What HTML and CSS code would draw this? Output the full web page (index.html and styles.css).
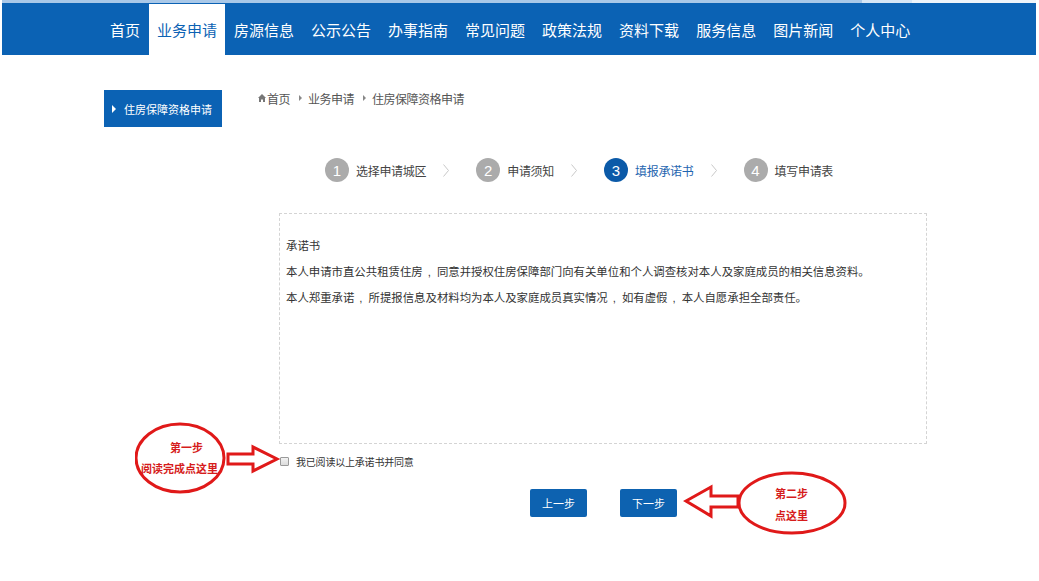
FILE: index.html
```html
<!DOCTYPE html>
<html lang="zh-CN">
<head>
<meta charset="utf-8">
<title>住房保障资格申请</title>
<link rel="stylesheet" href="styles.css">
</head>
<body>
<div class="topline"></div>
<nav class="nav">
  <a class="nav-item">首页</a>
  <a class="nav-item active">业务申请</a>
  <a class="nav-item">房源信息</a>
  <a class="nav-item">公示公告</a>
  <a class="nav-item">办事指南</a>
  <a class="nav-item">常见问题</a>
  <a class="nav-item">政策法规</a>
  <a class="nav-item">资料下载</a>
  <a class="nav-item">服务信息</a>
  <a class="nav-item">图片新闻</a>
  <a class="nav-item">个人中心</a>
</nav>

<div class="page">
  <aside class="sidebar">
    <div class="side-item"><span class="tri"></span>住房保障资格申请</div>
  </aside>
  <main class="main">
    <div class="crumbs">
      <svg class="home" width="8" height="8" viewBox="0 0 8 8"><path d="M4 0 L8 4 L7 4 L7 8 L5 8 L5 5.5 L3 5.5 L3 8 L1 8 L1 4 L0 4 Z" fill="#777"/></svg>
      <span>首页</span>
      <span class="sep"></span><span>业务申请</span>
      <span class="sep"></span><span>住房保障资格申请</span>
    </div>

    <div class="steps">
      <div class="step"><span class="num">1</span><span class="label">选择申请城区</span></div>
      <svg class="chev" width="6" height="13" viewBox="0 0 6 13"><path d="M0.5 0.5 L5.5 6.5 L0.5 12.5" fill="none" stroke="#c8c8c8" stroke-width="1"/></svg>
      <div class="step"><span class="num">2</span><span class="label">申请须知</span></div>
      <svg class="chev" width="6" height="13" viewBox="0 0 6 13"><path d="M0.5 0.5 L5.5 6.5 L0.5 12.5" fill="none" stroke="#c8c8c8" stroke-width="1"/></svg>
      <div class="step current"><span class="num">3</span><span class="label">填报承诺书</span></div>
      <svg class="chev" width="6" height="13" viewBox="0 0 6 13"><path d="M0.5 0.5 L5.5 6.5 L0.5 12.5" fill="none" stroke="#c8c8c8" stroke-width="1"/></svg>
      <div class="step"><span class="num">4</span><span class="label">填写申请表</span></div>
    </div>

    <div class="letter">
      <p>承诺书</p>
      <p>本人申请市直公共租赁住房<span class="comma">,</span>同意并授权住房保障部门向有关单位和个人调查核对本人及家庭成员的相关信息资料。</p>
      <p>本人郑重承诺<span class="comma">,</span>所提报信息及材料均为本人及家庭成员真实情况<span class="comma">,</span>如有虚假<span class="comma">,</span>本人自愿承担全部责任。</p>
    </div>

    <label class="agree"><span class="box"></span>我已阅读以上承诺书并同意</label>

    <div class="buttons">
      <button class="btn">上一步</button>
      <button class="btn">下一步</button>
    </div>
  </main>
</div>

<div class="note note-1">
  <svg width="150" height="74" viewBox="0 0 150 74">
    <ellipse cx="45" cy="37" rx="44" ry="34" fill="none" stroke="#e01919" stroke-width="3"/>
    <path d="M93 33 L118 33 L118 26 L142 38 L118 50 L118 43 L93 43 Z" fill="none" stroke="#e01919" stroke-width="3" stroke-linejoin="miter"/>
  </svg>
  <span class="note-text t1">第一步</span>
  <span class="note-text t2">阅读完成点这里</span>
</div>

<div class="note note-2">
  <svg width="170" height="66" viewBox="0 0 170 66">
    <path d="M6 31 L31 17 L31 26 L58 26 L58 37 L31 37 L31 46 Z" fill="none" stroke="#e01919" stroke-width="3" stroke-linejoin="miter"/>
    <ellipse cx="112" cy="33" rx="53" ry="30" fill="none" stroke="#e01919" stroke-width="3"/>
  </svg>
  <span class="note-text t3">第二步</span>
  <span class="note-text t4">点这里</span>
</div>
</body>
</html>
```

FILE: styles.css
```css
* { box-sizing: border-box; }

body {
  margin: 0;
  background: #fff;
  font-family: "Microsoft YaHei", "Noto Sans CJK SC", "Noto Sans", sans-serif;
  color: #333;
  position: relative;
  min-height: 581px;
}

.topline {
  height: 3px;
  margin: 0 3px 0 2px;
  background: linear-gradient(to right, #a9c8e8 0, #a9c8e8 860px, #d6e6f6 860px, #d6e6f6 910px, #eef4fa 910px);
}

.nav {
  height: 52px;
  margin: 0 3px 0 2px;
  background: #0b62b4;
  display: flex;
  align-items: stretch;
  padding-left: 100px;
  gap: 1px;
}

.nav-item {
  display: flex;
  align-items: center;
  padding: 0 8px;
  color: #fff;
  font-size: 15px;
  letter-spacing: 0;
  cursor: pointer;
}

.nav-item.active {
  background: #fff;
  color: #0b62b4;
  margin-top: 1px;
}

.page {
  display: flex;
  align-items: flex-start;
  padding: 35px 0 0 104px;
}

.sidebar { width: 118px; flex: none; }

.side-item {
  height: 37px;
  background: #0b62b4;
  color: #fff;
  font-size: 11px;
  display: flex;
  align-items: center;
  padding-left: 8px;
  letter-spacing: 0;
}

.tri {
  width: 0;
  height: 0;
  border-left: 4px solid #fff;
  border-top: 4px solid transparent;
  border-bottom: 4px solid transparent;
  margin-right: 8px;
}

.main {
  margin-left: 36px;
  width: 680px;
}

.crumbs {
  height: 16px;
  display: flex;
  align-items: center;
  font-size: 12px;
  color: #555;
  letter-spacing: -0.5px;
}

.home { margin-right: 1px; }

.sep {
  width: 0;
  height: 0;
  border-left: 3px solid #888;
  border-top: 3px solid transparent;
  border-bottom: 3px solid transparent;
  margin: 0 6px 0 9px;
}

.steps {
  display: flex;
  align-items: center;
  margin-top: 52px;
  padding-left: 67px;
  height: 24px;
}

.step {
  display: flex;
  align-items: center;
}

.num {
  width: 24px;
  height: 24px;
  border-radius: 50%;
  background: #ababab;
  color: #fff;
  font-family: "Liberation Sans", Arial, sans-serif;
  font-size: 15px;
  display: flex;
  align-items: center;
  justify-content: center;
  margin-right: 7px;
}

.label {
  font-size: 12px;
  color: #444;
  letter-spacing: -0.3px;
}

.step.current .num { background: #0b5aa8; }
.step.current .label { color: #1f66b0; }

.chev { margin: 0 27px 0 17px; }

.letter {
  margin: 31px 0 0 21px;
  width: 648px;
  height: 231px;
  border: 1px dashed #d4d4d4;
  padding: 19px 6px 0;
  font-size: 11.4px;
  color: #333;
}

.letter p {
  margin: 0;
  line-height: 25.5px;
  white-space: nowrap;
}

.comma { margin: 0 6px 0 5px; font-family: "Liberation Sans", sans-serif; }

.agree {
  display: flex;
  align-items: center;
  margin: 11px 0 0 22px;
  height: 12px;
  font-size: 10px;
  color: #333;
  letter-spacing: -0.2px;
}

.box {
  width: 9px;
  height: 9px;
  border: 1px solid #9a9a9a;
  border-radius: 1px;
  background: linear-gradient(#f2f2f2, #dcdcdc);
  margin-right: 7px;
}

.buttons {
  display: flex;
  gap: 33px;
  margin: 22px 0 0 272px;
}

.btn {
  width: 57px;
  height: 28px;
  border: none;
  border-radius: 2px;
  background: #0d62b0;
  color: #fff;
  font-family: inherit;
  font-size: 11px;
  padding: 0;
}

.note { position: absolute; }
.note-1 { left: 135px; top: 421px; width: 150px; height: 74px; }
.note-2 { left: 680px; top: 470px; width: 170px; height: 66px; }
.note svg { display: block; }

.note-text {
  position: absolute;
  color: #d61c1c;
  font-size: 11px;
  font-weight: bold;
  white-space: nowrap;
}
.t1 { left: 35px; top: 18px; }
.t2 { left: 6px; top: 39px; }
.t3 { left: 95px; top: 15px; }
.t4 { left: 95px; top: 37px; }
```
